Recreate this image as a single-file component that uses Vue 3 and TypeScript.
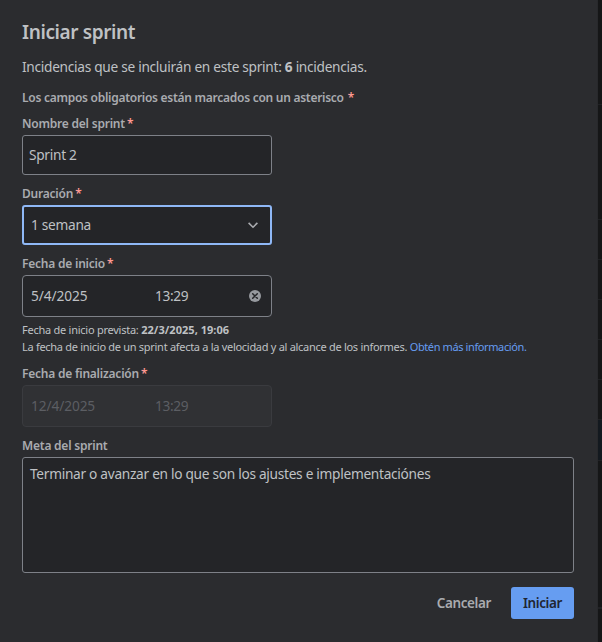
<script setup lang="ts">
import { ref } from 'vue'

const issueCount = ref(6)
const sprintName = ref('Sprint 2')
const duration = ref('1 semana')
const start = ref({ date: '5/4/2025', time: '13:29' })
const end = ref({ date: '12/4/2025', time: '13:29' })
const goal = ref('Terminar o avanzar en lo que son los ajustes e implementaciónes')
</script>

<template>
  <div class="page">
    <main class="dialog">
      <h1 class="title"><span>Iniciar sprint</span></h1>
      <p class="intro"><span>Incidencias que se incluirán en este sprint: <strong>{{ issueCount }}</strong> incidencias.</span></p>
      <p class="label note"><span>Los campos obligatorios están marcados con un asterisco</span><i class="req wide">*</i></p>

      <p class="label name-label"><span>Nombre del sprint</span><i class="req">*</i></p>
      <div class="field name"><span>{{ sprintName }}</span></div>

      <p class="label"><span>Duración</span><i class="req">*</i></p>
      <div class="field select">
        <span>{{ duration }}</span>
        <svg class="chevron" width="12" height="8" viewBox="0 0 12 8"><path d="M1.6 1.9 6 6.2l4.4-4.3" fill="none" stroke="currentColor" stroke-width="1.6" /></svg>
      </div>

      <p class="label"><span>Fecha de inicio</span><i class="req">*</i></p>
      <div class="field date">
        <span class="day">{{ start.date }}</span>
        <span class="time">{{ start.time }}</span>
        <svg class="clear" width="12" height="12" viewBox="0 0 12 12"><circle cx="6" cy="6" r="6" fill="currentColor" /><path d="m3.7 3.7 4.6 4.6m0-4.6L3.7 8.3" stroke="#242528" stroke-width="1.5" stroke-linecap="round" /></svg>
      </div>
      <div class="help">
        <p><span class="planned">Fecha de inicio prevista: <strong>22/3/2025, 19:06</strong></span></p>
        <p><span class="effect">La fecha de inicio de un sprint afecta a la velocidad y al alcance de los informes.</span> <a class="link">Obtén más información.</a></p>
      </div>

      <p class="label end-label"><span>Fecha de finalización</span><i class="req">*</i></p>
      <div class="field date disabled">
        <span class="day">{{ end.date }}</span>
        <span class="time">{{ end.time }}</span>
      </div>

      <p class="label goal-label"><span>Meta del sprint</span></p>
      <div class="goal"><span>{{ goal }}</span></div>

      <footer class="actions">
        <button class="btn subtle" type="button"><span>Cancelar</span></button>
        <button class="btn primary" type="button"><span>Iniciar</span></button>
      </footer>
    </main>
    <aside class="backdrop">
      <i class="r1"></i><i class="r2"></i><i class="r3"></i><i class="r3"></i><i class="r3"></i><i class="r3"></i><i class="r3"></i><i class="active"></i><i class="r4"></i><i></i>
    </aside>
  </div>
</template>

<style>
body { margin: 0; background: #2b2c2f; }
</style>

<style scoped>
.page {
  display: flex;
  width: 602px;
  height: 642px;
  overflow: hidden;
  background: #2b2c2f;
  color: #bfc1c4;
  font-family: "Noto Sans", "Open Sans", sans-serif;
  font-size: 13.7px;
  letter-spacing: -0.29px;
}
.dialog {
  box-sizing: border-box;
  flex: 1;
  min-width: 0;
  padding: 20px 24px 0 22px;
}
p, h1 { margin: 0; white-space: nowrap; }
.title { height: 24px; line-height: 24px; font-size: 19px; font-weight: 600; letter-spacing: -0.38px; }
.intro { margin-top: 13px; height: 20px; line-height: 20px; }
strong { font-weight: 700; }
.label {
  display: flex;
  margin-top: 11px;
  height: 16px;
  line-height: 16px;
  margin-bottom: 3px;
  font-size: 12px;
  font-weight: 600;
  letter-spacing: -0.22px;
  color: #a9abaf;
}
.note { margin-top: 13px; margin-bottom: 0; letter-spacing: -0.27px; }
.name-label { margin-top: 10px; }
.req { margin-left: 2px; line-height: 16px; font-style: normal; color: #fd9891; }
.req.wide { margin-left: 4px; }
.field {
  box-sizing: border-box;
  display: flex;
  align-items: center;
  width: 250px;
  height: 40px;
  border: 1px solid #7e8188;
  border-radius: 3px;
  background: #242528;
  padding: 0 8px;
}
.field span { padding-bottom: 2px; }
.name { padding-left: 6px; }
.select { border: 2px solid #8fb8f6; padding: 0 11px 0 7px; }
.chevron { margin-left: auto; color: #a9abaf; }
.date { height: 42px; border-radius: 4px; padding-right: 10px; }
.day { width: 124px; letter-spacing: -0.1px; }
.time { letter-spacing: -0.35px; }
.clear { margin-left: auto; color: #96999e; }
.help { margin-top: 4px; margin-bottom: 11px; font-size: 11px; letter-spacing: -0.29px; }
.help p { height: 17px; line-height: 17px; }
.planned { letter-spacing: -0.25px; }
.planned strong { letter-spacing: 0.03px; }
.link { color: #669df1; letter-spacing: -0.39px; }
.end-label { margin-top: 11px; }
.disabled { border-color: #3a3b3f; background: #303134; color: #5c5e63; }
.goal {
  box-sizing: border-box;
  height: 116px;
  border: 1px solid #7e8188;
  border-radius: 3px;
  background: #242528;
  padding: 6px 7px;
  line-height: 20px;
}
.actions { display: flex; justify-content: flex-end; gap: 8px; margin-top: 14px; }
.btn {
  height: 32px;
  border: 0;
  border-radius: 3px;
  padding: 0 12px;
  background: none;
  color: #a9abaf;
  font: 600 13.5px/32px "Noto Sans", "Open Sans", sans-serif;
  letter-spacing: -0.4px;
}
.primary { width: 63px; padding: 0; background: #669df1; color: #1f2532; }
.backdrop { display: flex; flex-direction: column; width: 4px; background: #151617; box-shadow: 0 0 1px #151617; }
.backdrop i { box-sizing: border-box; border-bottom: 1px solid #202124; }
.r1 { height: 105px; }
.r2 { height: 115px; }
.r3 { height: 40px; }
.active { height: 41px; background: #13191f; }
.r4 { height: 147px; }
</style>
